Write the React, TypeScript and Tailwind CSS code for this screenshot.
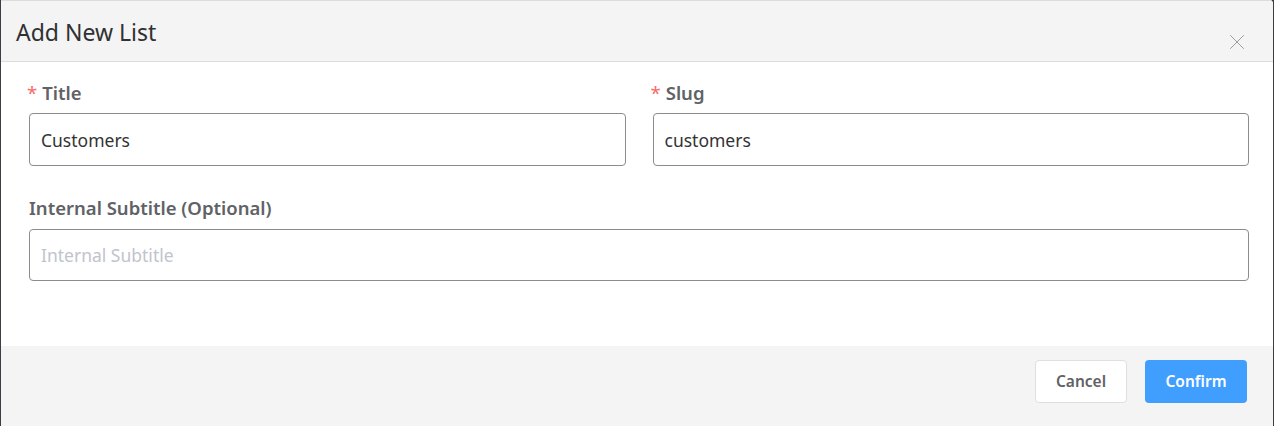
import { X } from "lucide-react";

export default function App() {
  const font = { fontFamily: '"Noto Sans", "Open Sans", sans-serif' };

  return (
    <div className="w-full h-[426px] bg-[#3b3f45] px-px" style={font}>
      <div className="h-full bg-white flex flex-col rounded-tr-[4px] overflow-hidden">
        {/* header */}
        <div className="h-[62px] bg-[#f4f4f4] border-t border-b border-[#dcdcdc] relative">
          <h2 className="absolute left-[15px] top-[15px] text-[23px] leading-[32px] text-[#303133]">Add New List</h2>
          <button className="absolute right-[23px] top-[28px] text-[#9a9a9a]">
            <X size={26} strokeWidth={0.9} />
          </button>
        </div>

        {/* body */}
        <div className="flex-1 pl-[28px] pr-[24px] pt-[21px]">
          <div className="grid grid-cols-2 gap-[27px]">
            <div>
              <label className="flex items-center h-[20px] mb-[10px] text-[18.5px] font-semibold text-[#606266]">
                <span className="text-[#f56c6c] font-normal -ml-[2px] mr-[5px]">*</span>Title
              </label>
              <input
                defaultValue="Customers"
                className="w-full h-[53px] border border-[#8c8c8c] rounded-[4px] px-[11px] text-[17.5px] text-[#333] outline-none"
              />
            </div>
            <div>
              <label className="flex items-center h-[20px] mb-[10px] text-[18.5px] font-semibold text-[#606266]">
                <span className="text-[#f56c6c] font-normal -ml-[2px] mr-[5px]">*</span>Slug
              </label>
              <input
                defaultValue="customers"
                className="w-full h-[53px] border border-[#8c8c8c] rounded-[4px] px-[11px] text-[17.5px] text-[#333] outline-none"
              />
            </div>
          </div>

          <div className="mt-[32px]">
            <label className="flex items-center h-[20px] mb-[11px] text-[18.5px] font-semibold text-[#606266]">
              Internal Subtitle (Optional)
            </label>
            <input
              placeholder="Internal Subtitle"
              className="w-full h-[52px] border border-[#8c8c8c] rounded-[4px] px-[11px] text-[17.5px] text-[#333] placeholder:text-[#c0c4cc] outline-none"
            />
          </div>
        </div>

        {/* footer */}
        <div className="h-[80px] bg-[#f4f4f4] flex justify-end items-start pt-[14px] pr-[26px] gap-[18px]">
          <button className="w-[92px] h-[43px] bg-white border border-[#dcdfe6] rounded-[4px] text-[15.5px] font-semibold text-[#606266]">
            Cancel
          </button>
          <button className="w-[102px] h-[43px] bg-[#409eff] rounded-[4px] text-[15.5px] font-semibold text-white">
            Confirm
          </button>
        </div>
      </div>
    </div>
  );
}
